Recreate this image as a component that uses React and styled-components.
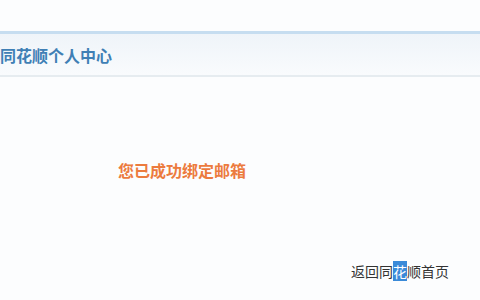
import React from 'react';
import styled, { createGlobalStyle } from 'styled-components';

const GlobalStyle = createGlobalStyle`
  html, body {
    margin: 0;
    padding: 0;
    background: #fcfdfe;
  }
  body {
    font-family: "Microsoft YaHei", "Noto Sans CJK SC", sans-serif;
  }
`;

const Page = styled.div`
  width: 480px;
  height: 300px;
  overflow: hidden;
  background: #fcfdfe;
  padding-top: 31px;
  box-sizing: border-box;
`;

const Header = styled.div`
  height: 41px;
  border-top: 3px solid #c6ddf0;
  border-bottom: 2px solid #e6ecf0;
  background: linear-gradient(#eff4f9, #f9fbfd);
  display: flex;
  align-items: center;
`;

const Title = styled.h1`
  margin: 0;
  font-size: 16px;
  font-weight: bold;
  color: #3f7fb5;
`;

const Body = styled.div`
  height: 103px;
  display: flex;
  align-items: flex-end;
  padding-left: 118px;
`;

const Message = styled.p`
  margin: 0;
  font-size: 16px;
  font-weight: bold;
  color: #ec7b3e;
  line-height: 20px;
`;

const Footer = styled.div`
  display: flex;
  justify-content: flex-end;
  padding: 82px 31px 0 0;
`;

const HomeLink = styled.a`
  font-size: 14px;
  color: #333;
  text-decoration: none;
  line-height: 18px;
`;

const Selected = styled.span`
  background: #3a8ad8;
  color: #fff;
`;

export default function App() {
  return (
    <>
      <GlobalStyle />
      <Page>
        <Header>
          <Title>同花顺个人中心</Title>
        </Header>
        <Body>
          <Message>您已成功绑定邮箱</Message>
        </Body>
        <Footer>
          <HomeLink href="#">
            返回同<Selected>花</Selected>顺首页
          </HomeLink>
        </Footer>
      </Page>
    </>
  );
}
